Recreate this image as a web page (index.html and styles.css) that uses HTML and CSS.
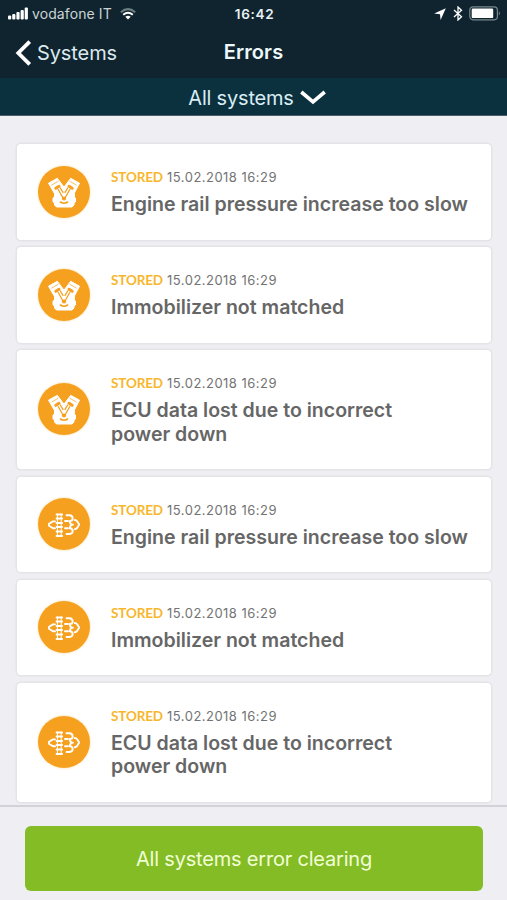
FILE: index.html
```html
<!DOCTYPE html>
<html lang="en">
<head>
<meta charset="utf-8">
<title>Errors</title>
<link rel="stylesheet" href="styles.css">
</head>
<body>
<svg class="defs" width="0" height="0" aria-hidden="true">
  <symbol id="engine" viewBox="0 0 52 52">
    <path fill="#fff" stroke="#fff" stroke-width="1" stroke-linejoin="round" d="M10.5 17.2 L19.3 12.3 L26 21.2 L32.7 12.3 L41.5 17.2 L36.4 27 V31 L37.5 32 V36 L36 37 V39 L34 41 H18.5 L16.5 39 V37 L15 36 V32 L16.5 31 V27.5 Z"/>
    <g fill="none" stroke="#f6a01f" stroke-linecap="round">
      <path stroke-width=".7" d="M13.8 19 L20 15.4 M38.2 19 L32 15.4"/>
      <path stroke-width="3" d="M17.8 22.3 L21 20.3 M34.2 22.3 L31 20.3"/>
      <path stroke-width="1.3" d="M20.2 23.5 L25 32 M31.8 23.5 L27 32 M22.3 22 L25 26.4 M29.7 22 L27 26.4"/>
      <path stroke-width="1.6" d="M22.4 36 Q26 38.4 29.6 36"/>
    </g>
    <circle cx="26" cy="32.5" r="2.1" fill="#f6a01f"/>
  </symbol>
  <symbol id="gearbox" viewBox="0 0 52 52">
    <g fill="none" stroke="#fff" stroke-width="1.9" stroke-linecap="round" stroke-linejoin="round">
      <path d="M17 23.4 H15 L11 25.8 V27.8 L15 30.2 H17"/>
      <path stroke-width="2.2" d="M18.7 16.5 H24 M18.7 20.5 H24 M18.7 25 H24 M18.7 29 H24 M18.7 33.5 H24 M18.7 38 H24"/>
      <path stroke-width="1" d="M19.4 16 V38 M23.2 16 V38"/>
      <path d="M27 23 H30 M27 30.3 H30"/>
      <path d="M28.5 17.3 H31.5 Q34.7 17.5 34.7 20.8 Q34.5 23 31.8 23 Q31.8 26.6 35 26.6 Q31.8 27 31.8 30.3 Q34.5 30.5 34.7 32.8 Q34.7 35.9 31.5 36 H28.5"/>
      <path d="M36.8 22 Q38.8 22 39.6 24 L41.2 26.6 L39.6 29.2 Q38.8 31.2 36.8 31.2"/>
    </g>
  </symbol>
</svg>
<div class="app">
  <header class="top">
    <div class="status">
      <div class="carrier">
        <svg class="signal" viewBox="0 0 20 13" fill="#fff"><rect x="0" y="8.5" width="3.2" height="4" rx="1"/><rect x="4.2" y="7" width="3.2" height="5.5" rx="1"/><rect x="8.4" y="5" width="3.2" height="7.5" rx="1"/><rect x="12.6" y="3" width="3.2" height="9.5" rx="1"/><rect x="16.7" y="0.5" width="3.2" height="12" rx="1"/></svg>
        <span class="network">vodafone IT</span>
        <svg class="wifi" viewBox="0 0 16 12" fill="none" stroke="#fff" stroke-width="2"><path stroke="#6d7d84" d="M.8 4.2 Q8 -2 15.2 4.2"/><path d="M3.2 6.8 Q8 2.8 12.8 6.8"/><path fill="#fff" stroke="none" d="M5.3 8.7 Q8 6.6 10.7 8.7 L8 11.5 Z"/></svg>
      </div>
      <span class="clock">16:42</span>
      <div class="indicators">
        <svg class="location" viewBox="0 0 12 12" fill="#fff"><path d="M11.8.3 L.2 5.6 L6 6.2 L6.6 11.9 Z"/></svg>
        <svg class="bluetooth" viewBox="0 0 10 15" fill="none" stroke="#fff" stroke-width="1.3"><path d="M1 4 L8.5 10.8 L5 14 V1 L8.5 4.2 L1 11"/></svg>
        <svg class="battery" viewBox="0 0 32 15"><rect x=".8" y=".8" width="27.6" height="13" rx="3.2" fill="none" stroke="#7a888e" stroke-width="1.2"/><rect x="2.7" y="2.5" width="21.5" height="9.6" rx="1.2" fill="#fff"/><path d="M29.8 5 Q32 7.3 29.8 9.6 Z" fill="#7a888e"/></svg>
      </div>
    </div>
    <nav class="nav">
      <a class="back"><svg class="back-arrow" viewBox="0 0 16 26" fill="none" stroke="#fff" stroke-width="3.8"><path d="M14.2 1.6 L2.8 13 L14.2 24.4"/></svg><span class="back-label">Systems</span></a>
      <h1 class="title">Errors</h1>
    </nav>
  </header>
  <div class="filter"><span class="filter-label">All systems</span><svg class="chevron" viewBox="0 0 26 15" fill="none" stroke="#fff" stroke-width="3.6"><path d="M1.3 2 L13 11.8 L24.7 2"/></svg></div>
  <main class="list">
    <article class="card"><svg class="icon"><use href="#engine"/></svg><div class="info"><p class="meta"><b class="state">STORED</b><time class="time">15.02.2018 16:29</time></p><h2 class="name">Engine rail pressure increase too slow</h2></div></article>
    <article class="card"><svg class="icon"><use href="#engine"/></svg><div class="info"><p class="meta"><b class="state">STORED</b><time class="time">15.02.2018 16:29</time></p><h2 class="name">Immobilizer not matched</h2></div></article>
    <article class="card"><svg class="icon"><use href="#engine"/></svg><div class="info"><p class="meta"><b class="state">STORED</b><time class="time">15.02.2018 16:29</time></p><h2 class="name">ECU data lost due to incorrect<br>power down</h2></div></article>
    <article class="card"><svg class="icon"><use href="#gearbox"/></svg><div class="info"><p class="meta"><b class="state">STORED</b><time class="time">15.02.2018 16:29</time></p><h2 class="name">Engine rail pressure increase too slow</h2></div></article>
    <article class="card"><svg class="icon"><use href="#gearbox"/></svg><div class="info"><p class="meta"><b class="state">STORED</b><time class="time">15.02.2018 16:29</time></p><h2 class="name">Immobilizer not matched</h2></div></article>
    <article class="card"><svg class="icon"><use href="#gearbox"/></svg><div class="info"><p class="meta"><b class="state">STORED</b><time class="time">15.02.2018 16:29</time></p><h2 class="name">ECU data lost due to incorrect<br>power down</h2></div></article>
  </main>
  <footer class="footer"><button class="clear">All systems error clearing</button></footer>
</div>
</body>
</html>
```
FILE: styles.css
```css
* { box-sizing: border-box; margin: 0; padding: 0; }
body { width: 507px; height: 900px; overflow: hidden; background: #efeef3; font-family: Inter, "Liberation Sans", sans-serif; }
svg { display: block; flex: none; }
.defs { position: absolute; }
.app { display: flex; flex-direction: column; height: 900px; }
.top { height: 78px; background: #0f242e; color: #fff; }
.status { height: 27px; display: grid; grid-template-columns: 1fr auto 1fr; align-items: center; padding: 0 6px 0 8px; }
.carrier, .indicators { display: flex; align-items: center; }
.indicators { justify-content: flex-end; }
.signal { width: 20px; height: 13px; }
.network { margin-left: 4px; font-size: 14px; line-height: 18px; color: #cbd3d7; letter-spacing: 0.1px; white-space: nowrap; }
.wifi { width: 16px; height: 12px; margin-left: 8px; }
.clock { font-size: 13.5px; font-weight: 600; line-height: 18px; letter-spacing: 0.7px; color: #e9f0f2; }
.location { width: 12px; height: 12px; }
.bluetooth { width: 10px; height: 15px; margin-left: 7px; }
.battery { width: 32px; height: 15px; margin-left: 6px; }
.nav { height: 51px; display: grid; grid-template-columns: 1fr auto 1fr; align-items: center; padding: 0 15px; }
.back { display: flex; align-items: center; }
.back-arrow { width: 17px; height: 26px; }
.back-label { margin-left: 5px; font-size: 20px; line-height: 24px; letter-spacing: -0.1px; color: #dce9ee; }
.title { position: relative; top: -1px; font-size: 20px; font-weight: 600; line-height: 24px; letter-spacing: 0.1px; color: #eef8fb; }
.filter { height: 38px; background: #0b303e; border-bottom: 1px solid #49606c; display: flex; align-items: center; justify-content: center; gap: 6px; padding-left: 7px; padding-top: 2px; }
.filter-label { font-size: 20px; line-height: 24px; letter-spacing: -0.2px; color: #d9edf4; }
.chevron { width: 26px; height: 15px; }
.list { height: 689px; padding: 28px 16px 0 17px; display: flex; flex-direction: column; gap: 7.6px; overflow: hidden; }
.card { flex: none; display: flex; align-items: center; padding: 21.5px 0 22px 20.5px; background: #fff; border-radius: 4px; box-shadow: 0 0 0 1.5px #e4e3e8; }
.icon { width: 52px; height: 52px; border-radius: 50%; background: #f6a01f; box-shadow: 0 0 2px 1px #fdf0d8; }
.info { margin-left: 21.5px; padding-bottom: 1.1px; }
.meta { display: flex; align-items: center; height: 23px; }
.state { font: 700 13.5px/20px Lato, sans-serif; letter-spacing: -0.15px; color: #f7b72d; width: 56px; }
.time { font-size: 13px; line-height: 20px; letter-spacing: 0.48px; color: #737373; }
.name { margin-top: 4.5px; font-size: 19.55px; font-weight: 600; line-height: 23.4px; color: #666; white-space: nowrap; }
.footer { flex: 1; border-top: 2px solid #d3d2d8; padding: 19px 24px 0 25px; }
.clear { display: block; width: 100%; height: 65px; border: 0; border-radius: 6px; background: #84bc25; color: #f1ffd7; font-family: inherit; font-size: 20px; letter-spacing: -0.2px; }
```
